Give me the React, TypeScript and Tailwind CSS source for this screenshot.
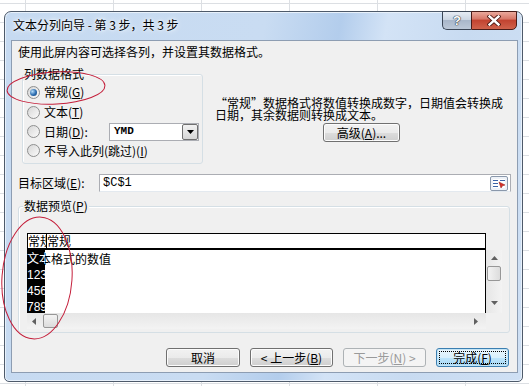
import React from 'react';

const cjk = "font-['Noto_Sans_CJK_SC','Noto_Sans',sans-serif]";

const Radio = ({ checked = false }: { checked?: boolean }) => (
  <span className="w-[13px] h-[13px] shrink-0 rounded-full border border-[#8e8f8f] bg-[linear-gradient(135deg,#d6d6d6,#fbfbfb)] flex items-center justify-center">
    {checked && <span className="w-[7px] h-[7px] rounded-full bg-[radial-gradient(circle_at_35%_35%,#b5dcf9,#2a6cb0_55%,#123f72)]" />}
  </span>
);

const WinButton = ({ children, className = '', disabled = false, focused = false }: { children: React.ReactNode; className?: string; disabled?: boolean; focused?: boolean }) => {
  const look = disabled
    ? 'border-[#adb2b5] bg-[#f4f4f4] text-[#9a9a9a]'
    : focused
      ? 'border-[#3c7fb1] bg-[linear-gradient(to_bottom,#eaf6fd_0%,#d9f0fc_50%,#bee6fd_51%,#a7d9f5_100%)] text-black shadow-[inset_0_0_0_1px_#c4e5f6]'
      : 'border-[#707070] bg-[linear-gradient(to_bottom,#f2f2f2_0%,#ebebeb_50%,#dddddd_51%,#cfcfcf_100%)] text-black shadow-[inset_0_0_0_1px_#fcfcfc]';
  return (
    <div className={`h-[19px] rounded-[3px] border flex items-center justify-center text-[12px] leading-none ${look} ${className}`}>
      {focused ? (
        <div className="m-[2px] h-[13px] self-stretch flex-1 border border-dotted border-black flex items-center justify-center">{children}</div>
      ) : children}
    </div>
  );
};

const RangeIcon = () => (
  <svg width="18" height="15" viewBox="0 0 18 15">
    <rect x="0.5" y="0.5" width="17" height="14" rx="1.5" fill="#eef2f8" stroke="#8a98ab" />
    <rect x="3" y="3" width="12" height="9" fill="#ffffff" />
    <path d="M3 4.5h5M3 7.5h5M3 10.5h5M10 4.5h5" stroke="#3b63a8" strokeWidth="1.2" />
    <path d="M9 6l6 3-2.5 0.8L11 12z" fill="#d8302a" stroke="#8a1510" strokeWidth="0.5" />
  </svg>
);

export default function App() {
  return (
    <div className={`relative w-[529px] h-[386px] overflow-hidden bg-white bg-[linear-gradient(to_right,#dcdfe3_1px,transparent_1px),linear-gradient(to_bottom,#dcdfe3_1px,transparent_1px)] [background-size:88px_19px] [background-position:25px_3px] ${cjk} text-[12px] text-black`}>
      <div className="pt-[11px] pl-[4px]">
        {/* window frame */}
        <div className="w-[519px] h-[371px] rounded-t-[7px] rounded-b-[5px] border border-[#4e5a6a] bg-[linear-gradient(100deg,#c6daf1_0%,#c9dcf2_45%,#b3cdec_58%,#d3e3f6_66%,#c8dbf1_80%,#cfe0f4_100%)] shadow-[inset_0_0_0_1px_#e8f1fb] flex flex-col">
          <div className="h-[28px] flex justify-between items-start pl-[8px] pr-[5px]">
            <div className="mt-[6px] leading-[14px] [text-shadow:0_0_6px_#ffffff,0_0_3px_#ffffff]">文本分列向导 - 第 3 步，共 3 步</div>
            <div className="-mt-px flex">
              <div className="w-[29px] h-[19px] rounded-bl-[5px] border border-[#3b4656] border-r-0 bg-[linear-gradient(to_bottom,#e6ecf4_0%,#ccd6e3_45%,#a9b7ca_50%,#bcc8d8_100%)] flex items-center justify-center">
                <span className="font-['Liberation_Sans',sans-serif] font-bold text-[13px] leading-none text-white [text-shadow:0_0_1px_#2c3440,0_0_1px_#2c3440,0_0_1px_#2c3440]">?</span>
              </div>
              <div className="w-[46px] h-[19px] rounded-br-[5px] border border-[#4a1c18] bg-[linear-gradient(to_bottom,#eaa99c_0%,#d8796a_40%,#c24431_50%,#d0624c_100%)] flex items-center justify-center">
                <svg width="14" height="11" viewBox="0 0 14 11">
                  <path d="M2.5 1.5l9 8M11.5 1.5l-9 8" stroke="#4a1610" strokeWidth="4.2" strokeLinecap="square" />
                  <path d="M2.5 1.5l9 8M11.5 1.5l-9 8" stroke="#ffffff" strokeWidth="2.4" strokeLinecap="square" />
                </svg>
              </div>
            </div>
          </div>

          {/* client area */}
          <div className="ml-[6px] mr-[4px] mb-[8px] flex-1 border border-[#8d9db2] bg-[#f0f0f0] flex flex-col">
            <div className="mt-[4px] pl-[6px] leading-[14px]">使用此屏内容可选择各列，并设置其数据格式。</div>

            <div className="flex items-start">
              <div className="relative ml-[10px] mt-[15px] w-[181px] h-[90px] rounded-[3px] border border-[#d5dfe5] shadow-[inset_1px_1px_0_#ffffff] pt-[7px] pl-[4px]">
                <div className="absolute -top-[8px] left-0 px-[1px] bg-[#f0f0f0] leading-[14px]">列数据格式</div>
                <div className="h-[20px] flex items-center gap-[4px]"><Radio checked /><span>常规(<u>G</u>)</span></div>
                <div className="h-[20px] flex items-center gap-[4px]"><Radio /><span>文本(<u>T</u>)</span></div>
                <div className="h-[19px] flex items-center gap-[4px]">
                  <Radio />
                  <span className="w-[61px]">日期(<u>D</u>):</span>
                  <div className="w-[90px] h-[18px] border border-[#abadb3] bg-white flex items-center justify-between">
                    <span className="pl-[4px] font-['Liberation_Mono',monospace] font-bold text-[11px] leading-none">YMD</span>
                    <div className="w-[16px] h-[16px] border border-[#707070] rounded-[2px] bg-[linear-gradient(to_bottom,#f2f2f2,#d6d6d6)] flex items-center justify-center">
                      <svg width="7" height="4" viewBox="0 0 7 4"><path d="M0 0h7L3.5 4z" fill="#000" /></svg>
                    </div>
                  </div>
                </div>
                <div className="h-[19px] flex items-center gap-[4px]"><Radio /><span>不导入此列(跳过)(<u>I</u>)</span></div>
              </div>

              <div className="ml-[12px] mt-[38px] flex flex-col">
                <div className="leading-[12px] whitespace-nowrap">“常规”数据格式将数值转换成数字，日期值会转换成<br />日期，其余数据则转换成文本。</div>
                <WinButton className="mt-[2px] ml-[108px] w-[77px]">高级(<u>A</u>)...</WinButton>
              </div>
            </div>

            <div className="mt-[10px] h-[18px] pl-[6px] flex items-center">
              <span className="w-[81px]">目标区域(<u>E</u>):</span>
              <div className="w-[412px] h-[18px] border border-[#abadb3] border-b-[#e3e9ef] bg-white flex items-center justify-between">
                <span className="pl-[3px] font-['Liberation_Mono',monospace] text-[12px] leading-none">$C$1</span>
                <div className="mr-[2px]"><RangeIcon /></div>
              </div>
            </div>

            <div className="relative ml-[6px] mt-[14px] w-[492px] h-[127px] rounded-[3px] border border-[#d5dfe5] shadow-[inset_1px_1px_0_#ffffff] pl-[8px] pt-[26px]">
              <div className="absolute -top-[8px] left-[4px] px-[1px] bg-[#f0f0f0] leading-[14px]">数据预览(<u>P</u>)</div>

              {/* preview grid */}
              <div className="w-[475px] grid grid-cols-[459px_16px] grid-rows-[17px_63px_16px] leading-[14px]">
                <div className="border border-black border-b-2 bg-white flex">
                  <div className="w-[18px] overflow-hidden whitespace-nowrap">常规</div>
                  <div className="w-px bg-black" />
                  <div className="whitespace-nowrap">常规</div>
                </div>
                <div className="bg-[#f0f0f0]" />

                <div className="border-r border-black bg-white flex overflow-hidden">
                  <div className="w-[18px] bg-black text-white overflow-hidden whitespace-nowrap pt-[2px] font-['Liberation_Sans','Noto_Sans_CJK_SC',sans-serif]">
                    <div className="h-[16px]">文本格式的数值</div>
                    <div className="h-[16px]">123</div>
                    <div className="h-[16px]">456</div>
                    <div className="h-[16px]">789</div>
                  </div>
                  <div className="flex-1 overflow-hidden whitespace-nowrap pt-[2px]">
                    <div className="h-[16px] ml-[-18px]">文本格式的数值</div>
                  </div>
                </div>
                <div className="bg-[linear-gradient(to_right,#e6e6e6,#f3f3f3)] flex flex-col items-center">
                  <svg className="mt-[6px]" width="7" height="4" viewBox="0 0 7 4"><path d="M3.5 0L7 4H0z" fill="#606060" /></svg>
                  <div className="mt-[6px] w-[14px] h-[15px] rounded-[2px] border border-[#979797] bg-[linear-gradient(to_right,#f3f3f3,#dcdcdc)]" />
                  <svg className="mt-[20px]" width="7" height="4" viewBox="0 0 7 4"><path d="M0 0h7L3.5 4z" fill="#606060" /></svg>
                </div>

                <div className="bg-[linear-gradient(to_bottom,#e6e6e6,#f3f3f3)] flex items-center">
                  <svg className="ml-[5px]" width="4" height="7" viewBox="0 0 4 7"><path d="M0 3.5L4 0v7z" fill="#606060" /></svg>
                  <div className="ml-[7px] w-[15px] h-[14px] rounded-[2px] border border-[#979797] bg-[linear-gradient(to_bottom,#f3f3f3,#dcdcdc)]" />
                  <svg className="ml-auto mr-[8px]" width="4" height="7" viewBox="0 0 4 7"><path d="M4 3.5L0 0v7z" fill="#606060" /></svg>
                </div>
                <div className="bg-[#f0f0f0]" />
              </div>
            </div>

            <div className="mt-[15px] pr-[8px] flex justify-end gap-[10px]">
              <WinButton className="w-[74px]">取消</WinButton>
              <WinButton className="w-[83px]">&lt; 上一步(<u>B</u>)</WinButton>
              <WinButton className="w-[83px]" disabled>下一步(<u>N</u>) &gt;</WinButton>
              <WinButton className="w-[73px]" focused>完成(<u>F</u>)</WinButton>
            </div>
          </div>
        </div>
      </div>

      {/* hand-drawn red annotation ellipses */}
      <svg className="absolute inset-0 pointer-events-none" width="529" height="386" viewBox="0 0 529 386">
        <ellipse cx="56" cy="88" rx="49" ry="16" transform="rotate(-3 56 88)" fill="none" stroke="#c41e3a" strokeWidth="1" />
        <ellipse cx="37" cy="278" rx="35" ry="61" transform="rotate(4 37 278)" fill="none" stroke="#c41e3a" strokeWidth="1" />
      </svg>
    </div>
  );
}
